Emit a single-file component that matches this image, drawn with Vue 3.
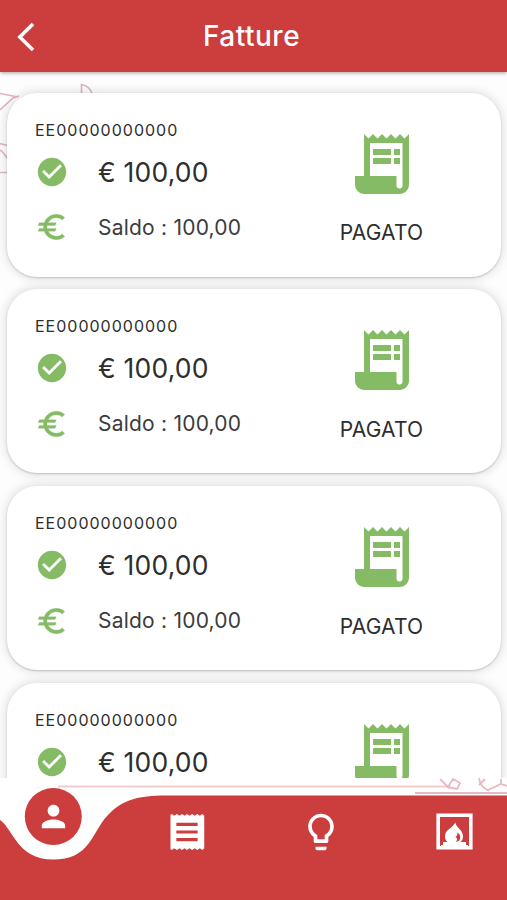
<script setup>
const invoices = [1, 2, 3, 4].map((id) => ({
  id,
  code: 'EE00000000000',
  amount: '€ 100,00',
  balance: 'Saldo : 100,00',
  status: 'PAGATO',
}))
</script>

<template>
  <div class="screen">
    <header class="bar">
      <svg class="back" width="20" height="32" viewBox="0 0 20 32">
        <path d="M17 3 3.800 16 17 29" fill="none" stroke="#fff" stroke-width="3.600" />
      </svg>
      <h1>Fatture</h1>
    </header>

    <main class="list">
      <svg class="sketch" width="110" height="120" viewBox="0 72 110 120" fill="none" stroke="#e2b6c0" stroke-width="1.700">
        <path d="M0 93.500 18 97M0 110 13 98l6-2M81.500 93V84.500c5 1 9 4 10.500 9M0 143.500l8 2M0 150c4 2 5 6 8 9M0 172.500h8" />
      </svg>
      <article v-for="item in invoices" :key="item.id" class="card">
        <div class="details">
          <div class="code">{{ item.code }}</div>
          <div class="row amount">
            <svg width="34" height="34" viewBox="0 0 24 24" fill="#85bb65">
              <path d="M12 2C6.480 2 2 6.480 2 12s4.480 10 10 10 10-4.480 10-10S17.520 2 12 2zm-2 15-5-5 1.410-1.410L10 14.170l7.590-7.590L19 8l-9 9z" />
            </svg>
            <span>{{ item.amount }}</span>
          </div>
          <div class="row balance">
            <svg width="34" height="34" viewBox="0 0 24 24" fill="#85bb65" stroke="#85bb65" stroke-width="0.200">
              <path d="M15 18.500c-2.510 0-4.680-1.420-5.760-3.500H14.200l.8-2H8.580c-.05-.33-.08-.66-.08-1s.03-.67.08-1H14.200L15 9H9.240C10.320 6.920 12.500 5.500 15 5.500c1.610 0 3.090.59 4.230 1.570L21 5.300C19.410 3.870 17.300 3 15 3c-3.920 0-7.240 2.510-8.480 6H3l-.8 2h3.860c-.04.33-.06.66-.06 1s.02.67.06 1H3l-.8 2h4.320c1.240 3.490 4.560 6 8.480 6 2.310 0 4.410-.87 6-2.300l-1.780-1.770c-1.130.98-2.600 1.570-4.220 1.570z" />
            </svg>
            <span>{{ item.balance }}</span>
          </div>
        </div>
        <div class="status">
          <svg width="54" height="60" viewBox="0 0 54 60" fill="#85bb65">
            <path fill-rule="evenodd" d="M9 0l4.500 4.500L18 0l4.500 4.500L27 0l4.500 4.500L36 0l4.500 4.500L45 0l4.500 4.500L54 0v51a9 9 0 0 1-9 9H9a9 9 0 0 1-9-9v-9h9zM15 9v33h26.500v9.500a3 3 0 0 0 6 0V9z" />
            <path d="M18 15h18v6H18zM39 15h6v6h-6zM18 24h18v6H18zM39 24h6v6h-6z" />
          </svg>
          <span>{{ item.status }}</span>
        </div>
      </article>
    </main>

    <nav class="tabs">
      <svg class="shape" width="507" height="122" viewBox="0 778 507 122">
        <g fill="none" stroke="#e6b9c3" stroke-width="1.800">
          <path d="M58 786.500H450" stroke="#f0ccd1" />
          <path d="M415 793H507" />
          <path d="M440 779l8 8 5-8 7 4-3 6-10-2M479 778c1 8 5 10 10 13M479 785l6-6M488 790l13-6 6 2M501 784v-5" />
        </g>
        <path fill="#cc3d3d" d="M0 820C5 823 10 832 16 840.500C24 852 35 859.500 53.500 859.500C70 859.500 81 854 89 843C97 832 101 821 111 812C124 800 139 795.500 165 795.500H507V900H0z" />
        <circle cx="53.300" cy="816.500" r="28.500" fill="#cc3d3d" />
      </svg>
      <button class="tab active" aria-label="Profile">
        <svg width="35" height="35" viewBox="0 0 24 24" fill="#fff">
          <path d="M12 12c2.210 0 4-1.790 4-4s-1.790-4-4-4-4 1.790-4 4 1.790 4 4 4zm0 2c-2.670 0-8 1.340-8 4v2h16v-2c0-2.660-5.330-4-8-4z" />
        </svg>
      </button>
      <button class="tab" aria-label="Invoices">
        <svg width="44" height="44" viewBox="0 0 24 24">
          <path fill="#fff" d="M3 21.300l.7.500L5 20.900l1.500.9 1.400-.9 1.400.9 1.400-.9 1.300.9 1.400-.9 1.400.9 1.400-.9 1.400.9 1.400-.9 1.300.9 1.100-.9V3.100l-1.100-.9-1.300.9-1.400-.9-1.400.9-1.400-.9-1.400.9-1.400-.9-1.300.9-1.400-.9-1.400.9-1.400-.9L5 3.100l-1.300-.9-.7.500z" />
          <path fill="#cc3d3d" d="M6.200 7h11.600v1.700H6.200zM6.200 11.150h11.600v1.700H6.200zM6.200 15.300h11.600V17H6.200z" />
        </svg>
      </button>
      <button class="tab" aria-label="Electricity">
        <svg width="44" height="44" viewBox="0 0 24 24" fill="#fff">
          <path d="M9 21c0 .55.45 1 1 1h4c.55 0 1-.45 1-1v-1H9v1zm3-19C8.140 2 5 5.140 5 9c0 2.380 1.190 4.470 3 5.740V17c0 .55.45 1 1 1h6c.55 0 1-.45 1-1v-2.260c1.810-1.270 3-3.360 3-5.740 0-3.860-3.140-7-7-7zm2.850 11.100-.85.6V16h-4v-2.300l-.85-.6C7.800 12.160 7 10.630 7 9c0-2.760 2.240-5 5-5s5 2.240 5 5c0 1.630-.8 3.160-2.150 4.100z" />
        </svg>
      </button>
      <button class="tab" aria-label="Gas">
        <svg width="37" height="37" viewBox="0 0 37 37">
          <path d="M2.200 2.200h32.600v32.600H2.200z" fill="none" stroke="#fff" stroke-width="3.600" />
          <path fill="#fff" d="M19.500 9.500c0 5 7.500 7 7.500 14 0 2.500-1 4.500-2.500 5.500H30v3h2v3H5v-3h2v-3h4.500C10 28 9 26 9 23.500c0-7 6-7 10.500-14z" />
          <path fill="#cc3d3d" d="M21.500 19.500c4 2.500 4 9-2 9.500 2.500-2 2-3.500 0-5 1.500-1 2-2.500 2-4.500z" />
        </svg>
      </button>
    </nav>
  </div>
</template>

<style>
body {
  margin: 0;
}
</style>

<style scoped>
.screen {
  display: flex;
  flex-direction: column;
  width: 507px;
  height: 900px;
  overflow: hidden;
  background: #fff;
  font-family: Inter, 'Liberation Sans', sans-serif;
  color: #2e2e2e;
}

.bar {
  display: grid;
  grid-template-columns: 60px 1fr 64px;
  align-items: center;
  flex: none;
  height: 72px;
  background: #cc3d3d;
  box-shadow: 0 1px 4px rgba(0, 0, 0, 0.35);
  position: relative;
  z-index: 1;
}

.back {
  margin-left: 16px;
  margin-top: 1px;
}

h1 {
  margin: 0;
  text-align: center;
  color: #fff;
  font-size: 28px;
  font-weight: 500;
  line-height: 34px;
  letter-spacing: 0.5px;
}

.list {
  position: relative;
  flex: none;
  box-sizing: border-box;
  height: 706px;
  padding: 20.800px 6px 0 7px;
  display: flex;
  flex-direction: column;
  gap: 12.700px;
  overflow: hidden;
  background: #fdfdfd;
}

.sketch {
  position: absolute;
  left: 0;
  top: 0;
}

.card {
  position: relative;
  display: flex;
  flex: none;
  box-sizing: border-box;
  height: 184px;
  border-radius: 30px;
  background: #fff;
  box-shadow: 0 1px 2px rgba(0, 0, 0, 0.18), 0 0 12px rgba(0, 0, 0, 0.16);
}

.details {
  box-sizing: border-box;
  width: 280px;
  padding: 27px 0 0 28px;
}

.code {
  font-size: 16px;
  line-height: 20px;
  letter-spacing: 1px;
}

.row {
  display: flex;
  align-items: center;
  height: 34px;
  white-space: nowrap;
}

.row svg {
  flex: none;
  margin-right: 29px;
}

.amount {
  margin-top: 15px;
  font-size: 26.500px;
  letter-spacing: 0.200px;
}

.balance {
  margin-top: 21.500px;
  font-size: 21px;
  letter-spacing: 0.220px;
  color: #3c3c3c;
}

.status {
  display: flex;
  flex-direction: column;
  align-items: center;
  width: 189px;
  padding-top: 41px;
}

.status span {
  margin-top: 26.500px;
  font-size: 21px;
  line-height: 26px;
  letter-spacing: 0.200px;
}

.tabs {
  position: relative;
  display: flex;
  flex: none;
  height: 122px;
  background: #fff;
}

.shape {
  position: absolute;
  left: 0;
  top: 0;
}

.tab {
  position: relative;
  display: flex;
  flex: none;
  justify-content: center;
  align-items: center;
  width: 134px;
  height: 107px;
  padding: 0;
  border: 0;
  background: none;
}

.tab.active {
  width: 107px;
  height: 77px;
}

.tab:nth-of-type(2) {
  margin-left: 13px;
}

.tab:last-child {
  width: 132px;
}
</style>
